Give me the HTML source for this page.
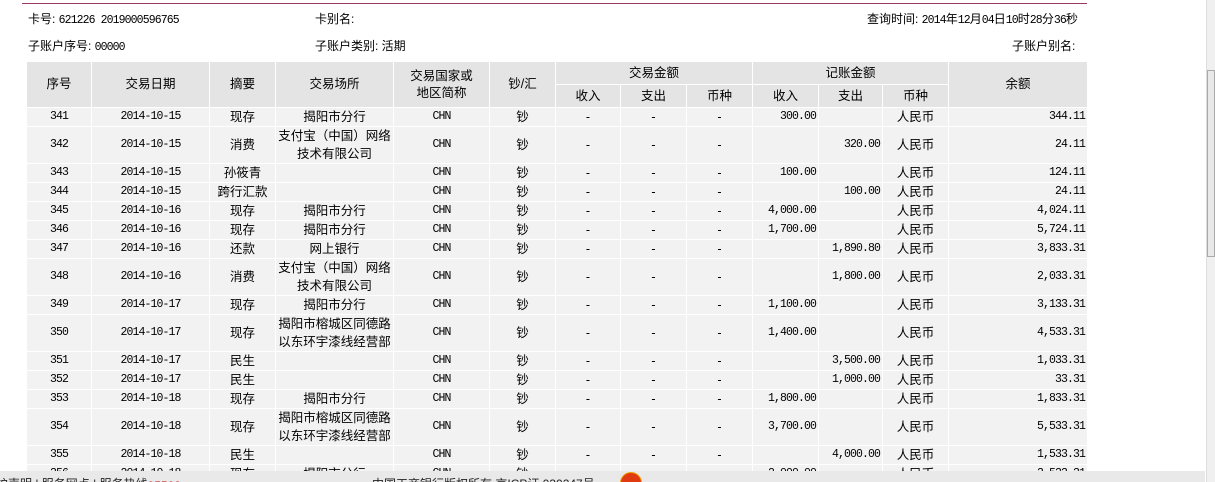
<!DOCTYPE html>
<html><head><meta charset="utf-8"><style>
html,body{margin:0;padding:0;width:1215px;height:482px;overflow:hidden;background:#fff;font-family:"Liberation Sans","Noto Sans CJK SC",sans-serif;font-size:12px;color:#000;position:relative}
.topline{position:absolute;left:22px;top:3px;width:1065px;height:1px;background:#9a3a64}
.t{position:absolute;white-space:nowrap;font-size:12px}
.m{font-family:"Liberation Mono",monospace;font-size:11.5px;letter-spacing:-0.9px}
table{position:absolute;left:26px;top:61px;border-collapse:collapse;table-layout:fixed}
td{border:1px solid #fff;background:#f2f2f2;text-align:center;padding:0;font-size:12.5px;line-height:18px;height:18px;overflow:hidden;white-space:nowrap}
tr.h td{background:#e4e4e4;height:22px;line-height:17px;font-size:12.5px}
td.n{font-family:"Liberation Mono",monospace;font-size:11.5px;letter-spacing:-0.9px}
td.r{text-align:right;padding-right:2px;font-family:"Liberation Mono",monospace;font-size:11.5px;letter-spacing:-0.9px}
.foot{position:absolute;left:0;top:471px;width:1205px;height:11px;background:#e9e9e9;overflow:hidden}
.foot span{position:absolute;top:4px;font-size:12px;white-space:nowrap;color:#222}
.sb{position:absolute;left:1206px;top:0;width:9px;height:482px;background:#f0f0f0;border-left:1px solid #ddd}
.thumb{position:absolute;left:1207px;top:70px;width:8px;height:187px;background:#e8e8e8;border:1px solid #aaa;box-sizing:border-box}
</style></head><body>
<div class="topline"></div>
<div class="t" style="left:28px;top:10px">卡号: <span class="m">621226 2019000596765</span></div>
<div class="t" style="left:315px;top:10px">卡别名:</div>
<div class="t" style="left:867px;top:10px">查询时间: <span class="m">2014</span>年<span class="m">12</span>月<span class="m">04</span>日<span class="m">10</span>时<span class="m">28</span>分<span class="m">36</span>秒</div>
<div class="t" style="left:28px;top:37px">子账户序号: <span class="m">00000</span></div>
<div class="t" style="left:315px;top:37px">子账户类别: 活期</div>
<div class="t" style="left:1012px;top:37px">子账户别名:</div>
<table>
<colgroup><col style="width:65px"><col style="width:118px"><col style="width:66px"><col style="width:118px"><col style="width:96px"><col style="width:66px"><col style="width:65px"><col style="width:66px"><col style="width:66px"><col style="width:66px"><col style="width:64px"><col style="width:66px"><col style="width:139px"></colgroup>
<tr class="h"><td rowspan="2">序号</td><td rowspan="2">交易日期</td><td rowspan="2">摘要</td><td rowspan="2">交易场所</td><td rowspan="2">交易国家或<br>地区简称</td><td rowspan="2">钞/汇</td><td colspan="3">交易金额</td><td colspan="3">记账金额</td><td rowspan="2">余额</td></tr>
<tr class="h"><td>收入</td><td>支出</td><td>币种</td><td>收入</td><td>支出</td><td>币种</td></tr>
<tr><td class="n">341</td><td class="n">2014-10-15</td><td>现存</td><td>揭阳市分行</td><td class="n">CHN</td><td>钞</td><td>-</td><td>-</td><td>-</td><td class="r">300.00</td><td class="r"></td><td>人民币</td><td class="r">344.11</td></tr>
<tr><td class="n">342</td><td class="n">2014-10-15</td><td>消费</td><td>支付宝（中国）网络<br>技术有限公司</td><td class="n">CHN</td><td>钞</td><td>-</td><td>-</td><td>-</td><td class="r"></td><td class="r">320.00</td><td>人民币</td><td class="r">24.11</td></tr>
<tr><td class="n">343</td><td class="n">2014-10-15</td><td>孙筱青</td><td></td><td class="n">CHN</td><td>钞</td><td>-</td><td>-</td><td>-</td><td class="r">100.00</td><td class="r"></td><td>人民币</td><td class="r">124.11</td></tr>
<tr><td class="n">344</td><td class="n">2014-10-15</td><td>跨行汇款</td><td></td><td class="n">CHN</td><td>钞</td><td>-</td><td>-</td><td>-</td><td class="r"></td><td class="r">100.00</td><td>人民币</td><td class="r">24.11</td></tr>
<tr><td class="n">345</td><td class="n">2014-10-16</td><td>现存</td><td>揭阳市分行</td><td class="n">CHN</td><td>钞</td><td>-</td><td>-</td><td>-</td><td class="r">4,000.00</td><td class="r"></td><td>人民币</td><td class="r">4,024.11</td></tr>
<tr><td class="n">346</td><td class="n">2014-10-16</td><td>现存</td><td>揭阳市分行</td><td class="n">CHN</td><td>钞</td><td>-</td><td>-</td><td>-</td><td class="r">1,700.00</td><td class="r"></td><td>人民币</td><td class="r">5,724.11</td></tr>
<tr><td class="n">347</td><td class="n">2014-10-16</td><td>还款</td><td>网上银行</td><td class="n">CHN</td><td>钞</td><td>-</td><td>-</td><td>-</td><td class="r"></td><td class="r">1,890.80</td><td>人民币</td><td class="r">3,833.31</td></tr>
<tr><td class="n">348</td><td class="n">2014-10-16</td><td>消费</td><td>支付宝（中国）网络<br>技术有限公司</td><td class="n">CHN</td><td>钞</td><td>-</td><td>-</td><td>-</td><td class="r"></td><td class="r">1,800.00</td><td>人民币</td><td class="r">2,033.31</td></tr>
<tr><td class="n">349</td><td class="n">2014-10-17</td><td>现存</td><td>揭阳市分行</td><td class="n">CHN</td><td>钞</td><td>-</td><td>-</td><td>-</td><td class="r">1,100.00</td><td class="r"></td><td>人民币</td><td class="r">3,133.31</td></tr>
<tr><td class="n">350</td><td class="n">2014-10-17</td><td>现存</td><td>揭阳市榕城区同德路<br>以东环宇漆线经营部</td><td class="n">CHN</td><td>钞</td><td>-</td><td>-</td><td>-</td><td class="r">1,400.00</td><td class="r"></td><td>人民币</td><td class="r">4,533.31</td></tr>
<tr><td class="n">351</td><td class="n">2014-10-17</td><td>民生</td><td></td><td class="n">CHN</td><td>钞</td><td>-</td><td>-</td><td>-</td><td class="r"></td><td class="r">3,500.00</td><td>人民币</td><td class="r">1,033.31</td></tr>
<tr><td class="n">352</td><td class="n">2014-10-17</td><td>民生</td><td></td><td class="n">CHN</td><td>钞</td><td>-</td><td>-</td><td>-</td><td class="r"></td><td class="r">1,000.00</td><td>人民币</td><td class="r">33.31</td></tr>
<tr><td class="n">353</td><td class="n">2014-10-18</td><td>现存</td><td>揭阳市分行</td><td class="n">CHN</td><td>钞</td><td>-</td><td>-</td><td>-</td><td class="r">1,800.00</td><td class="r"></td><td>人民币</td><td class="r">1,833.31</td></tr>
<tr><td class="n">354</td><td class="n">2014-10-18</td><td>现存</td><td>揭阳市榕城区同德路<br>以东环宇漆线经营部</td><td class="n">CHN</td><td>钞</td><td>-</td><td>-</td><td>-</td><td class="r">3,700.00</td><td class="r"></td><td>人民币</td><td class="r">5,533.31</td></tr>
<tr><td class="n">355</td><td class="n">2014-10-18</td><td>民生</td><td></td><td class="n">CHN</td><td>钞</td><td>-</td><td>-</td><td>-</td><td class="r"></td><td class="r">4,000.00</td><td>人民币</td><td class="r">1,533.31</td></tr>
<tr><td class="n">356</td><td class="n">2014-10-18</td><td>现存</td><td>揭阳市分行</td><td class="n">CHN</td><td>钞</td><td>-</td><td>-</td><td>-</td><td class="r">2,000.00</td><td class="r"></td><td>人民币</td><td class="r">3,533.31</td></tr>
</table>
<div class="foot">
<span style="left:-4px">护声明 | 服务网点 | 服务热线 <span style="color:#c00">95588</span></span>
<span style="left:372px">中国工商银行版权所有 京ICP证 030247号</span>
<span style="left:620px;top:1px;width:20px;height:20px;border-radius:50%;background:#e03a10;border:1px solid #f0a000"></span>
</div>
<div class="sb"></div>
<div class="thumb"></div>
</body></html>
